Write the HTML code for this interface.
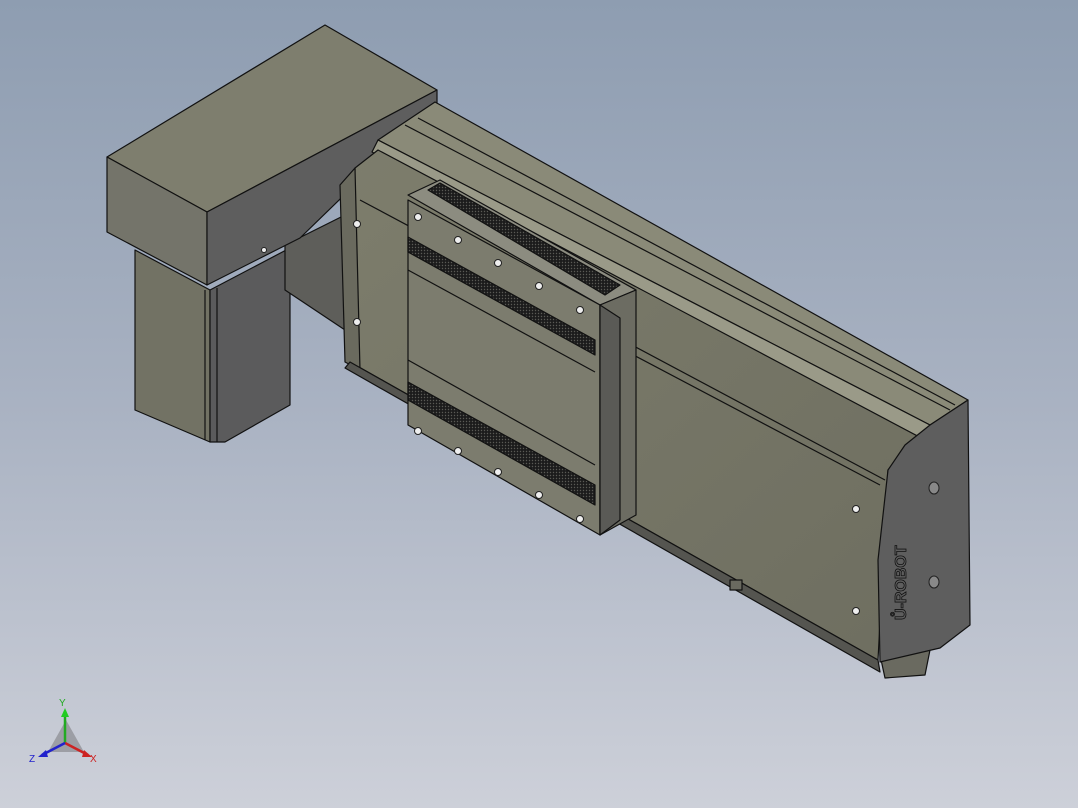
<!DOCTYPE html>
<html><head><style>
html,body{margin:0;padding:0;width:1078px;height:808px;overflow:hidden}
body{background:linear-gradient(180deg,#8e9db1 0%,#a9b2c2 50%,#cdd0d9 100%);font-family:"Liberation Sans",sans-serif}
svg{position:absolute;left:0;top:0}
</style></head><body>
<svg width="1078" height="808" viewBox="0 0 1078 808">
<defs>
<pattern id="mesh" width="3" height="3" patternUnits="userSpaceOnUse"><rect width="3" height="3" fill="#1c1c1c"/><circle cx="1.5" cy="1.5" r="0.7" fill="#5a5a55"/></pattern>
<linearGradient id="front" x1="0" y1="0" x2="1" y2="1"><stop offset="0" stop-color="#7d7d6c"/><stop offset="1" stop-color="#6e6e60"/></linearGradient>
</defs>
<g stroke="#111" stroke-width="1.2" stroke-linejoin="round">
<!-- motor vertical -->
<polygon points="135,250 210,290 210,442 135,410" fill="#727264"/>
<polygon points="210,290 290,248 290,405 225,442 210,442" fill="#5b5b5c"/>
<line x1="205" y1="290" x2="205" y2="440"/><line x1="217" y1="288" x2="217" y2="442"/>
<!-- shadow under motor box -->
<polygon points="285,245 345,215 345,330 285,290" fill="#5e5e5a"/>
<!-- motor box -->
<polygon points="107,157 325,25 437,90 207,212" fill="#7e7e6e"/>
<polygon points="107,157 207,212 207,285 107,232" fill="#74746a"/>
<polygon points="207,212 437,90 437,105 300,238 207,285" fill="#5e5e5e"/>
<!-- actuator top rail -->
<polygon points="378,140 435,102 968,400 930,425" fill="#8a8a78"/>
<polygon points="378,140 930,425 925,440 372,152" fill="#9a9a88"/>
<line x1="405" y1="125" x2="950" y2="410"/>
<line x1="418" y1="118" x2="955" y2="405"/>
<!-- main front face -->
<polygon points="355,168 378,150 925,440 888,470 878,660 350,362" fill="url(#front)"/>
<polygon points="340,185 355,168 360,370 345,362" fill="#6a6a5e"/>
<line x1="360" y1="200" x2="885" y2="480"/>
<line x1="605" y1="340" x2="880" y2="485"/>
<!-- underside lip -->
<polygon points="350,362 878,660 880,672 345,368" fill="#555550"/>
<polygon points="880,655 930,650 925,675 885,678" fill="#6a6a60"/>
<rect x="730" y="580" width="12" height="10" fill="#6a6a60"/>
<!-- end plate -->
<polygon points="888,470 905,445 930,425 968,400 970,625 940,648 880,662 878,560" fill="#5e5e5e"/>
<!-- carriage -->
<polygon points="408,195 440,180 636,290 600,305" fill="#8c8c80"/>
<polygon points="408,200 600,305 600,535 408,425" fill="#7c7c6e"/>
<polygon points="600,305 636,290 636,515 600,535" fill="#6c6c62"/>
<polygon points="600,305 620,318 620,520 600,535" fill="#5a5a56"/>
<polygon points="428,190 440,183 620,285 605,295" fill="url(#mesh)"/>
<polygon points="408,237 595,340 595,355 408,252" fill="url(#mesh)"/>
<polygon points="408,382 595,485 595,505 408,400" fill="url(#mesh)"/>
<line x1="408" y1="270" x2="595" y2="372"/>
<line x1="408" y1="360" x2="595" y2="465"/>
</g>
<!-- holes -->
<g fill="#eee" stroke="#222" stroke-width="1">
<circle cx="418" cy="217" r="3.5"/><circle cx="458" cy="240" r="3.5"/><circle cx="498" cy="263" r="3.5"/><circle cx="539" cy="286" r="3.5"/><circle cx="580" cy="310" r="3.5"/>
<circle cx="418" cy="431" r="3.5"/><circle cx="458" cy="451" r="3.5"/><circle cx="498" cy="472" r="3.5"/><circle cx="539" cy="495" r="3.5"/><circle cx="580" cy="519" r="3.5"/>
<circle cx="357" cy="224" r="3.5"/><circle cx="357" cy="322" r="3.5"/>
<circle cx="856" cy="509" r="3.5"/><circle cx="856" cy="611" r="3.5"/>
<ellipse cx="934" cy="488" rx="5" ry="6" fill="#888"/><ellipse cx="934" cy="582" rx="5" ry="6" fill="#888"/>
<circle cx="264" cy="250" r="2.5"/>
</g>
<text x="0" y="0" transform="translate(906,620) rotate(-90)" font-size="16" font-weight="bold" fill="none" stroke="#111" stroke-width="0.8">Ů-ROBOT</text>
<!-- axes -->
<g>
<polygon points="48,752 66,720 84,752" fill="#8a8a90" opacity="0.7"/>
<line x1="65" y1="743" x2="65" y2="713" stroke="#2a2" stroke-width="2.5"/>
<polygon points="61,717 65,708 69,717" fill="#2c2"/>
<line x1="65" y1="743" x2="88" y2="755" stroke="#c22" stroke-width="2.5"/>
<polygon points="84,750 92,757 82,757" fill="#c22"/>
<line x1="65" y1="743" x2="42" y2="755" stroke="#22c" stroke-width="2.5"/>
<polygon points="46,750 38,757 48,757" fill="#22c"/>
<text x="59" y="706" font-size="10" fill="#2a2">Y</text>
<text x="90" y="762" font-size="10" fill="#c22">X</text>
<text x="29" y="762" font-size="10" fill="#22c">Z</text>
</g>
</svg>
</body></html>
